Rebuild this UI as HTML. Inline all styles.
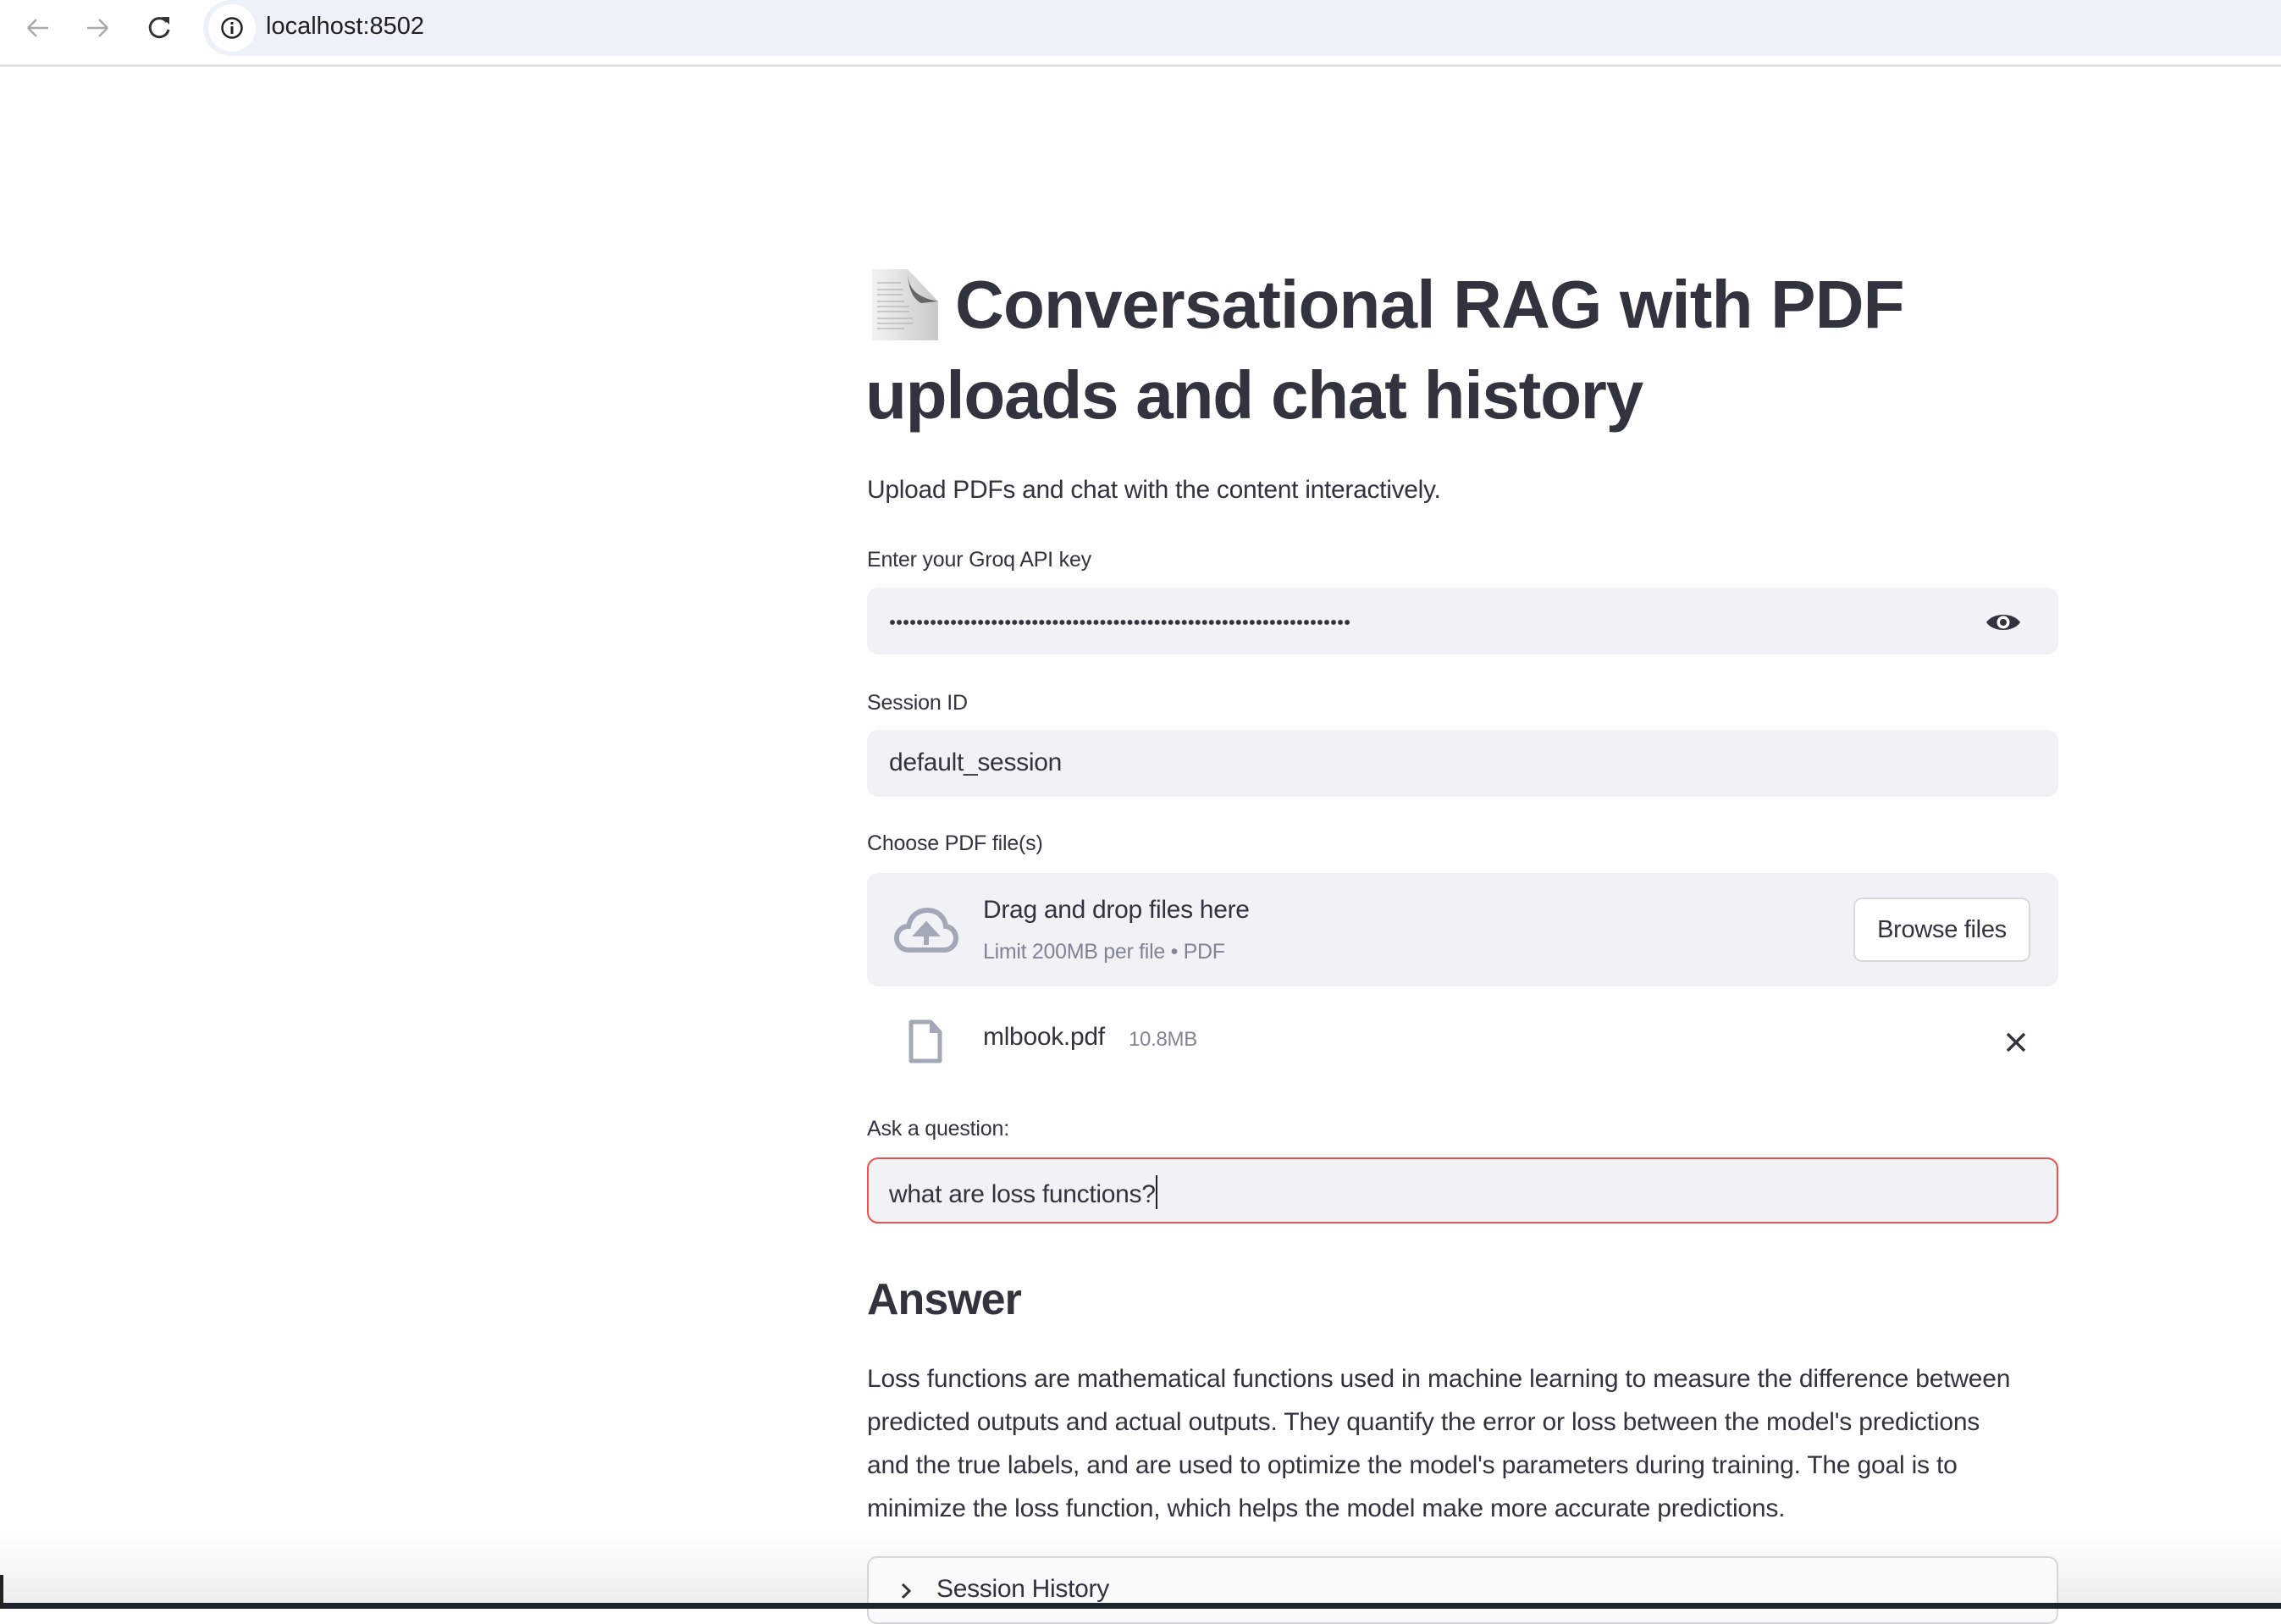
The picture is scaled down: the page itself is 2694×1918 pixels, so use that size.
<!DOCTYPE html>
<html><head><meta charset="utf-8"><style>
*{margin:0;padding:0;box-sizing:border-box}
body{width:2694px;height:1900px;overflow:hidden;background:#fff;font-family:"Liberation Sans",sans-serif;color:#31333f;position:relative}
.a{position:absolute;white-space:nowrap}
.lbl{font-size:25px;letter-spacing:-0.2px}
.box{position:absolute;left:1024px;width:1407px;background:#f0f2f6;border-radius:13px}
.p{font-size:30px;letter-spacing:-0.3px}
</style></head><body>
<div class="a" style="left:0;top:0;width:2694px;height:79px;background:#fff;border-bottom:3px solid #e3e3e3"></div>
<div class="a" style="left:240px;top:0;width:2460px;height:66px;background:#edf2fa;border-radius:33px 0 0 33px"></div>
<svg class="a" style="left:30px;top:18px" width="120" height="30" viewBox="0 0 120 30" fill="none" stroke-width="2.5">
<path d="M3 15H27M3 15L13 5M3 15L13 25" stroke="#aaa"/>
<path d="M73 15H97M97 15L87 5M97 15L87 25" stroke="#aaa"/>
</svg>
<svg class="a" style="left:172px;top:16px" width="32" height="34" viewBox="0 0 32 34" fill="none" stroke="#333" stroke-width="3"><path d="M25 10A11 11 0 1 0 27 19"/><path d="M19 4H28V13Z" fill="#333" stroke="none"/></svg>
<div class="a" style="left:246px;top:5px;width:56px;height:56px;border-radius:28px;background:#fff"></div>
<svg class="a" style="left:260px;top:19px" width="28" height="28" viewBox="0 0 28 28"><circle cx="14" cy="14" r="11.5" fill="none" stroke="#222" stroke-width="2.5"/><rect x="12.5" y="12" width="3" height="9" fill="#222"/><rect x="12.5" y="7" width="3" height="3" fill="#222"/></svg>
<div class="a" style="left:314px;top:15px;font-size:29px;color:#1f1f1f">localhost:8502</div>

<svg class="a" style="left:1028px;top:316px" width="82" height="88" viewBox="0 0 82 88"><defs><linearGradient id="g" x1="0" x2="1"><stop offset="0" stop-color="#f3f3f3"/><stop offset="1" stop-color="#c8c8c8"/></linearGradient></defs><path d="M2 2H44L80 40V86H2Z" fill="url(#g)"/><path d="M44 2C44 22 50 34 80 40L60 42C48 36 44 20 44 2Z" fill="#666"/><g stroke="#bbb" stroke-width="1.5"><path d="M8 18H36M8 26H38M8 32H38M8 40H40M8 46H46M8 52H46M8 60H50M8 66H50M8 72H40"/></g></svg>
<div class="a" style="left:1128px;top:314px;font-size:80px;font-weight:bold;letter-spacing:-0.8px;color:#31333f">Conversational RAG with PDF</div>
<div class="a" style="left:1022px;top:421px;font-size:80px;font-weight:bold;letter-spacing:-1.2px;color:#31333f">uploads and chat history</div>
<div class="a p" style="left:1024px;top:562px">Upload PDFs and chat with the content interactively.</div>

<div class="a lbl" style="left:1024px;top:647px">Enter your Groq API key</div>
<div class="box" style="top:694px;height:79px"></div>
<div class="a" style="left:1050px;top:731px;width:546px;height:8px;background:radial-gradient(circle at 4px 4px,#31333f 2.6px,transparent 3.2px) 0 0/8.03px 8px repeat-x"></div>
<svg class="a" style="left:2344px;top:721px" width="44" height="28" viewBox="0 0 44 28"><path d="M2 14C10 2 34 2 42 14C34 26 10 26 2 14Z" fill="#31333f"/><circle cx="22" cy="14" r="7.5" fill="#fff"/><circle cx="22" cy="14" r="4" fill="#31333f"/></svg>

<div class="a lbl" style="left:1024px;top:816px">Session ID</div>
<div class="box" style="top:862px;height:79px"></div>
<div class="a p" style="left:1050px;top:884px">default_session</div>

<div class="a lbl" style="left:1024px;top:982px">Choose PDF file(s)</div>
<div class="box" style="top:1031px;height:134px"></div>
<svg class="a" style="left:1056px;top:1072px" width="76" height="54" viewBox="0 0 76 54"><path d="M18 50C7 50 3 42 3 36C3 28 9 22 17 22C19 10 28 3 39 3C52 3 60 12 61 22C69 23 73 30 73 36C73 44 67 50 59 50Z" fill="none" stroke="#a3a8b8" stroke-width="6"/><path d="M38 44V22M28 31L38 20L48 31Z" stroke="#a3a8b8" stroke-width="6" fill="#a3a8b8"/></svg>
<div class="a p" style="left:1161px;top:1058px">Drag and drop files here</div>
<div class="a" style="left:1161px;top:1110px;font-size:25px;color:#808495;letter-spacing:-0.3px">Limit 200MB per file • PDF</div>
<div class="a" style="left:2189px;top:1060px;width:209px;height:76px;background:#fff;border:2px solid #d8d9de;border-radius:10px;font-size:29px;text-align:center;line-height:72px;letter-spacing:-0.3px">Browse files</div>

<svg class="a" style="left:1073px;top:1204px" width="40" height="52" viewBox="0 0 40 52"><path d="M3 3H26L37 15V49H3Z" fill="none" stroke="#a3a8b8" stroke-width="5" stroke-linejoin="round"/><path d="M25 3V16H37" fill="#a3a8b8"/></svg>
<div class="a p" style="left:1161px;top:1208px">mlbook.pdf</div>
<div class="a" style="left:1333px;top:1214px;font-size:24px;color:#808495;letter-spacing:-0.3px">10.8MB</div>
<svg class="a" style="left:2368px;top:1218px" width="26" height="26" viewBox="0 0 26 26"><path d="M3 3L23 23M23 3L3 23" stroke="#31333f" stroke-width="3.5"/></svg>

<div class="a lbl" style="left:1024px;top:1319px">Ask a question:</div>
<div class="box" style="top:1367px;height:78px;border:2px solid #e8534f"></div>
<div class="a p" style="left:1050px;top:1388px">what are loss functions?<span style="display:inline-block;width:2px;height:40px;background:#222;vertical-align:-8px"></span></div>

<div class="a" style="left:1024px;top:1505px;font-size:52px;font-weight:bold;letter-spacing:-1px">Answer</div>
<div class="a p" style="left:1024px;top:1603px;line-height:51px;letter-spacing:-0.2px">Loss functions are mathematical functions used in machine learning to measure the difference between<br>predicted outputs and actual outputs. They quantify the error or loss between the model's predictions<br>and the true labels, and are used to optimize the model's parameters during training. The goal is to<br>minimize the loss function, which helps the model make more accurate predictions.</div>

<div class="a" style="left:0;top:1810px;width:2694px;height:90px;background:linear-gradient(rgba(255,255,255,0),#ececec)"></div>
<div class="a" style="left:1024px;top:1838px;width:1407px;height:80px;border:2px solid #d6d6d8;border-radius:12px;background:#fafafa"></div>
<svg class="a" style="left:1062px;top:1868px" width="16" height="22" viewBox="0 0 16 22"><path d="M4 3L12 11L4 19" fill="none" stroke="#31333f" stroke-width="3"/></svg>
<div class="a p" style="left:1106px;top:1860px">Session History</div>
<div class="a" style="left:0;top:1893px;width:2694px;height:7px;background:#1e232d"></div>
<div class="a" style="left:0;top:1860px;width:4px;height:40px;background:#222"></div>
</body></html>
